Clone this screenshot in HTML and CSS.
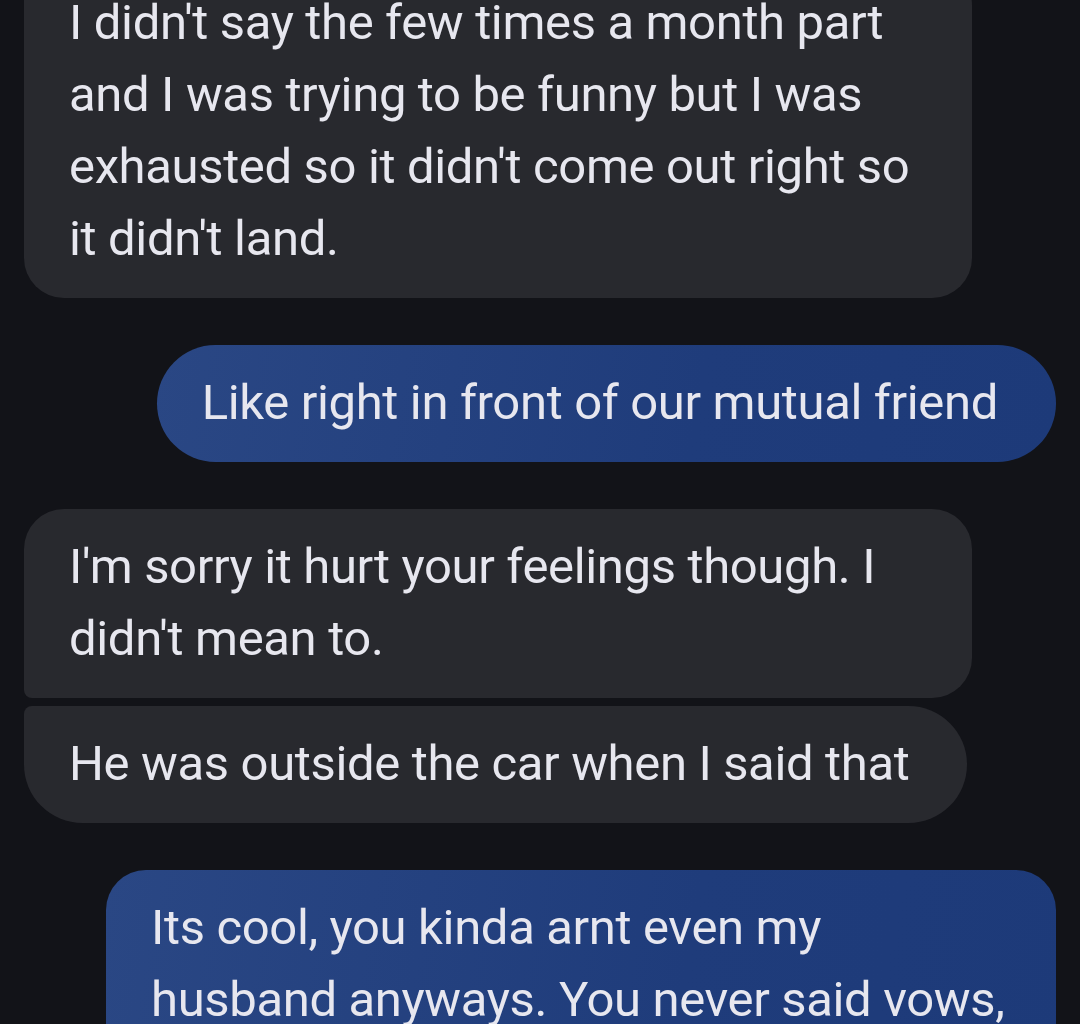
FILE: index.html
```html
<!DOCTYPE html>
<html lang="en">
<head>
    <meta charset="UTF-8">
    <meta name="viewport" content="width=device-width, initial-scale=1.0">
    <title>Messages</title>
    <link rel="stylesheet" href="styles.css">
</head>
<body>
    <div class="thread">
        <div class="msg incoming">
            <div class="bubble wrap tail-top">I didn't say the few times a month part<br>and I was trying to be funny but I was<br>exhausted so it didn't come out right so<br>it didn't land.</div>
        </div>

        <div class="msg outgoing">
            <div class="bubble pill">Like right in front of our mutual friend</div>
        </div>

        <div class="group">
            <div class="msg incoming">
                <div class="bubble wrap first">I'm sorry it hurt your feelings though. I<br>didn't mean to.</div>
            </div>
            <div class="msg incoming">
                <div class="bubble last pill-right">He was outside the car when I said that</div>
            </div>
        </div>

        <div class="msg outgoing">
            <div class="bubble wrap">Its cool, you kinda arnt even my<br>husband anyways. You never said vows,<br>so it doesn't count.</div>
        </div>
    </div>
</body>
</html>
```

FILE: styles.css
```css
* {
    margin: 0;
    padding: 0;
    box-sizing: border-box;
}

body {
    font-family: Roboto, "Noto Sans", sans-serif;
    background: #121318;
    color: #e7e7ef;
    min-height: 100vh;
    overflow: hidden;
}

.thread {
    display: flex;
    flex-direction: column;
    gap: 47px;
    padding: 0 24px;
    margin-top: -35px;
}

.group {
    display: flex;
    flex-direction: column;
    gap: 8px;
}

.msg {
    display: flex;
}

.msg.incoming {
    justify-content: flex-start;
    padding-right: 84px;
}

.msg.outgoing {
    justify-content: flex-end;
    padding-left: 82px;
}

.bubble {
    font-size: 49px;
    line-height: 72px;
    letter-spacing: -0.35px;
    padding: 22px 58px 23px 45px;
    border-radius: 40px;
    white-space: nowrap;
}

.bubble.wrap {
    flex: 1;
    min-width: 0;
}

.incoming .bubble {
    background: #28292e;
}

.outgoing .bubble {
    background: linear-gradient(100deg, #2a4784 0%, #1f3c7b 60%, #1d3a79 100%);
}

.bubble.pill {
    border-radius: 59px;
}

.bubble.tail-top {
    border-top-left-radius: 8px;
}

.bubble.first {
    border-bottom-left-radius: 8px;
}

.bubble.last {
    border-top-left-radius: 8px;
}

.bubble.pill-right {
    border-top-right-radius: 59px;
    border-bottom-right-radius: 59px;
    border-bottom-left-radius: 59px;
}
```
